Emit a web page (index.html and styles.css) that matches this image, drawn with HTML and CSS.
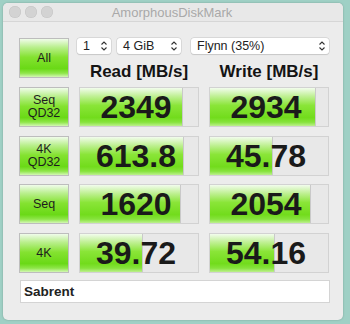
FILE: index.html
```html
<!DOCTYPE html>
<html lang="en">
<head>
<meta charset="UTF-8">
<title>AmorphousDiskMark</title>
<link rel="stylesheet" href="styles.css">
</head>
<body>
<div class="window">
    <div class="titlebar">
        <div class="lights">
            <span class="light"></span>
            <span class="light"></span>
            <span class="light"></span>
        </div>
        <div class="title">AmorphousDiskMark</div>
    </div>
    <div class="content">
        <div class="grid">
            <div class="btn">All</div>
            <div class="head">
                <div class="selects">
                    <div class="select s-count">1<svg class="arrows" viewBox="0 0 8 12"><path d="M1.5 4.5 4 2l2.5 2.5M1.5 7.5 4 10l2.5-2.5"/></svg></div>
                    <div class="select s-size">4 GiB<svg class="arrows" viewBox="0 0 8 12"><path d="M1.5 4.5 4 2l2.5 2.5M1.5 7.5 4 10l2.5-2.5"/></svg></div>
                    <div class="select s-disk">Flynn (35%)<svg class="arrows" viewBox="0 0 8 12"><path d="M1.5 4.5 4 2l2.5 2.5M1.5 7.5 4 10l2.5-2.5"/></svg></div>
                </div>
                <div class="labels">
                    <div class="label">Read [MB/s]</div>
                    <div class="label">Write [MB/s]</div>
                </div>
            </div>

            <div class="btn">Seq<br>QD32</div>
            <div class="result"><div class="bar" style="width: 87%"></div><div class="num">2349</div></div>
            <div class="result"><div class="bar" style="width: 90%"></div><div class="num">2934</div></div>

            <div class="btn">4K<br>QD32</div>
            <div class="result"><div class="bar" style="width: 88%"></div><div class="num">613.8</div></div>
            <div class="result"><div class="bar" style="width: 53%"></div><div class="num">45.78</div></div>

            <div class="btn">Seq</div>
            <div class="result"><div class="bar" style="width: 86%"></div><div class="num">1620</div></div>
            <div class="result"><div class="bar" style="width: 86%"></div><div class="num">2054</div></div>

            <div class="btn">4K</div>
            <div class="result"><div class="bar" style="width: 53%"></div><div class="num">39.72</div></div>
            <div class="result"><div class="bar" style="width: 55%"></div><div class="num">54.16</div></div>
        </div>
        <div class="comment">Sabrent</div>
    </div>
</div>
</body>
</html>
```

FILE: styles.css
```css
body {
    margin: 0;
    background-color: #9fd0c5;
    font-family: "Liberation Sans", Arial, sans-serif;
    height: 324px;
    overflow: hidden;
}
.window {
    margin: 3px 0 0 3px;
    width: 340px;
    height: 317px;
    background-color: #ececec;
    border-radius: 5px;
    box-shadow: 0 0 2px rgba(0, 0, 0, 0.25);
    overflow: hidden;
}
.titlebar {
    height: 18px;
    background-color: #e8e8e8;
    border-bottom: 1px solid #d6d6d6;
    display: flex;
    align-items: center;
    position: relative;
}
.lights {
    display: flex;
    gap: 4px;
    padding-left: 6px;
}
.light {
    width: 12px;
    height: 12px;
    border-radius: 50%;
    background-color: #d3d3d3;
    box-shadow: inset 0 0 0 0.5px #c4c4c4;
}
.title {
    flex: 1;
    text-align: center;
    margin-left: -52px;
    font-size: 13px;
    color: #a9a9a9;
}
.content {
    padding: 16px 0 0 16px;
}
.grid {
    display: grid;
    grid-template-columns: 50px 120px 120px;
    grid-template-rows: repeat(5, 40px);
    column-gap: 10px;
    row-gap: 8.75px;
}
.btn {
    box-sizing: border-box;
    height: 40px;
    border: 1px solid #bdbdbd;
    background: linear-gradient(to bottom, #f0fcea 0%, #b9ef8c 22%, #84e230 48%, #6ad916 78%, #8fe64a 90%, #d4f7b6 100%);
    display: flex;
    align-items: center;
    justify-content: center;
    text-align: center;
    font-size: 12.5px;
    line-height: 13px;
    color: #1d1d1d;
}
.head {
    grid-column: 2 / 4;
    height: 40px;
}
.selects {
    display: flex;
    gap: 6px;
    margin-left: -2px;
}
.select {
    box-sizing: border-box;
    height: 16px;
    background-color: #fff;
    border-radius: 3px;
    box-shadow: 0 0 0 0.5px #c8c8c8, 0 0.5px 1px rgba(0, 0, 0, 0.15);
    font-size: 12.5px;
    line-height: 16px;
    color: #222;
    padding-left: 6px;
    display: flex;
    justify-content: space-between;
    align-items: center;
}
.arrows {
    width: 8px;
    height: 12px;
    margin-right: 3px;
    fill: none;
    stroke: #333;
    stroke-width: 1.1;
}
.s-count {
    width: 34px;
}
.s-size {
    width: 64px;
}
.s-disk {
    width: 138px;
    margin-left: 4px;
}
.labels {
    display: grid;
    grid-template-columns: 120px 120px;
    column-gap: 10px;
    margin-top: 8px;
}
.label {
    text-align: center;
    font-size: 17px;
    font-weight: bold;
    line-height: 20px;
    color: #141414;
}
.result {
    box-sizing: border-box;
    height: 40px;
    border: 1px solid #d2d2d2;
    background-color: #e8e8e8;
    display: grid;
}
.bar,
.num {
    grid-area: 1 / 1;
}
.bar {
    box-sizing: border-box;
    border-right: 1px solid #c9c9c9;
    background: linear-gradient(to bottom, #f2fced 0%, #bff093 22%, #8ae538 46%, #72dc1c 78%, #86e33c 90%, #bdf08e 100%);
}
.num {
    text-align: center;
    font-size: 32px;
    font-weight: bold;
    line-height: 38px;
    color: #1a1a1a;
    padding-right: 6px;
}
.comment {
    box-sizing: border-box;
    width: 310px;
    height: 23px;
    margin: 7px 0 0 1px;
    background-color: #fff;
    border: 1px solid #d4d4d4;
    font-size: 13.5px;
    font-weight: bold;
    line-height: 21px;
    padding-left: 3px;
    color: #222;
}
```
